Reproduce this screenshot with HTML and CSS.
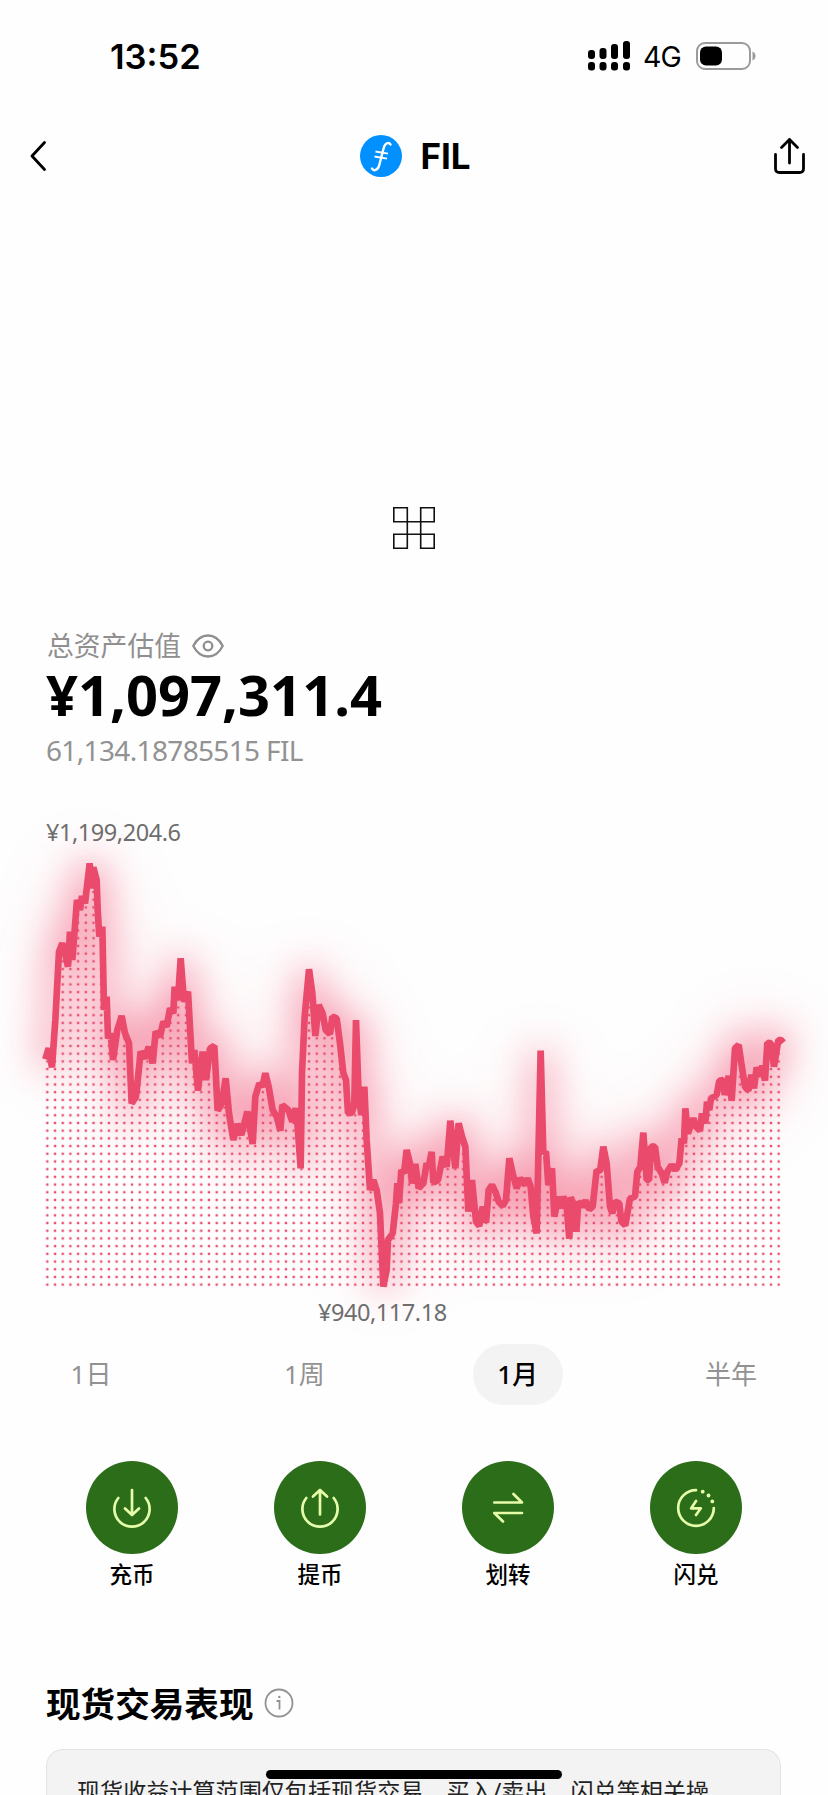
FILE: index.html
```html
<!DOCTYPE html>
<html lang="zh-CN">
<head>
  <meta charset="UTF-8">
  <meta name="viewport" content="width=device-width, initial-scale=1.0">
  <title>FIL</title>
  <link rel="stylesheet" href="styles.css">
</head>
<body>
  <!-- Status Bar -->
  <div class="status-bar">
    <span class="time">13:52</span>
    <div class="status-icons">
      <svg class="signal" width="43" height="30" viewBox="0 0 43 30">
        <rect x="0" y="9" width="7" height="9" rx="3"/>
        <rect x="11.5" y="7" width="7" height="11" rx="3"/>
        <rect x="23" y="3" width="7" height="15" rx="3"/>
        <rect x="35" y="0" width="7" height="18" rx="3"/>
        <rect x="0" y="21" width="7" height="8.5" rx="3"/>
        <rect x="11.5" y="21" width="7" height="8.5" rx="3"/>
        <rect x="23" y="21" width="7" height="8.5" rx="3"/>
        <rect x="35" y="21" width="7" height="8.5" rx="3"/>
      </svg>
      <span class="network">4G</span>
      <svg class="battery" width="60" height="28" viewBox="0 0 60 28">
        <rect x="1" y="1" width="53" height="26" rx="8" fill="none" stroke="#9b9b9b" stroke-width="2"/>
        <rect x="4" y="4.5" width="22" height="19" rx="6"/>
        <path d="M56.5 9.500 C60.500 11 60.500 17 56.500 18.500 Z" fill="#9b9b9b"/>
      </svg>
    </div>
  </div>

  <!-- Header Section -->
  <div class="header">
    <svg class="back" width="20" height="32" viewBox="0 0 20 32">
      <path d="M16.500 2.500 L4 16 L16.500 29.500"/>
    </svg>
    <div class="coin">
      <svg width="42" height="42" viewBox="0 0 42 42">
        <circle cx="21" cy="21" r="21" fill="#0090ff"/>
        <path class="coin-mark" d="M30.500 9.500 C29 6.500 25 8 23.700 13 L19.300 30 C18 35.500 13.500 36.500 12 33.500"/>
        <path class="coin-bar" d="M15.500 16.500 L28 18.700 M14.500 21.500 L27 23.700"/>
      </svg>
      <h1>FIL</h1>
    </div>
    <svg class="share" width="34" height="38" viewBox="0 0 34 38">
      <path d="M2.500 17.500 V31.500 Q2.500 35.500 6.500 35.500 H26.500 Q30.500 35.500 30.500 31.500 V17.500 M16.500 26 V2.500 M8.500 10.500 L16.500 2.500 L24.500 10.500"/>
    </svg>
  </div>

  <!-- Refresh indicator -->
  <div class="loader">
    <svg width="42" height="42" viewBox="0 0 42 42">
      <path d="M.8 .8 H14.300 V41.200 H.8 V27.300 H41.200 V41.200 H27.700 V.8 H41.200 V14.700 H.8 Z"/>
    </svg>
  </div>

  <!-- Balance Section -->
  <div class="balance">
    <div class="balance-label">
      <span>总资产估值</span>
      <svg width="32" height="24" viewBox="0 0 32 24">
        <path d="M1.300 12 C8.500 -2 23.500 -2 30.700 12 C23.500 26 8.500 26 1.300 12 Z"/>
        <circle cx="16" cy="12" r="4.300"/>
      </svg>
    </div>
    <div class="balance-value">¥1,097,311.4</div>
    <div class="balance-coin">61,134.18785515 FIL</div>
  </div>

  <!-- Chart Section -->
  <div class="chart">
    <div class="chart-max">¥1,199,204.6</div>
    <svg class="chart-plot" width="828" height="440" viewBox="-90 90 2484 1320">
      <defs>
        <pattern id="dots" x="40.500" y="1405.500" width="23.095" height="23.095" patternUnits="userSpaceOnUse">
          <rect x="8" y="8" width="7" height="7" fill="#ea4a6c"/>
        </pattern>
        <filter id="glow" filterUnits="userSpaceOnUse" x="-300" y="-300" width="2900" height="2100">
          <feGaussianBlur stdDeviation="54"/>
        </filter>
        <filter id="halo" filterUnits="userSpaceOnUse" x="-400" y="-400" width="3200" height="2300">
          <feGaussianBlur stdDeviation="110"/>
        </filter>
        <polyline id="line" points="46,718 56,685 66,742 76,600 87,395 97,370 105,400 114,440 120,335 127,420 141,240 150,270 156,228 165,250 172,190 179,130 184,205 190,142 200,180 203,270 208,350 217,320 222,570 230,530 234,655 242,640 249,720 262,630 275,588 285,640 297,670 305,850 318,830 332,695 345,715 356,680 368,730 377,635 390,650 400,605 410,620 420,565 430,580 434,500 444,540 452,415 462,545 474,515 486,730 493,690 504,812 518,695 528,780 540,685 553,678 563,872 575,850 587,775 597,880 610,960 622,912 634,945 652,875 668,972 676,830 688,790 697,800 706,760 716,800 728,870 740,890 751,932 757,855 775,870 787,905 797,865
          800,880 812,1045 816,760 824,590 837,448 847,520 856,648 866,555 878,580 887,630 900,642 907,590 920,595 930,670 940,760 948,780 954,880 966,878 973,850 978,600 986,830 994,885 1003,800 1010,960 1020,1110 1030,1080 1040,1110 1050,1180 1060,1400 1070,1350 1074,1260 1088,1240 1098,1150 1102,1090 1107,1150 1114,1050 1122,1060 1130,990 1140,1030 1146,1090 1156,1032 1166,1105 1180,1090 1190,1030 1196,1040 1205,996 1210,1088 1224,1080 1238,1010 1250,1040 1261,902 1276,1045 1286,910 1296,950 1306,980 1315,1175 1326,1080 1338,1205 1348,1218 1358,1160 1368,1208 1376,1110 1386,1095 1396,1115 1406,1145 1418,1158 1428,1140 1438,1015 1448,1060 1460,1105 1470,1075 1485,1095 1493,1075 1502,1100 1510,1190 1520,1240
          1532,692 1540,1000 1548,995 1555,1095 1566,1045 1573,1190 1585,1130 1593,1165 1600,1130 1610,1160 1618,1256 1622,1132 1630,1150 1639,1235 1645,1145 1657,1160 1667,1142 1678,1168 1688,1160 1700,1050 1710,1055 1720,980 1730,1030 1740,1160 1747,1180 1755,1145 1768,1150 1774,1205 1786,1216 1800,1135 1815,1130 1822,1055 1831,1040 1840,938 1850,1080 1857,1080 1863,980 1875,980 1883,1040 1895,1060 1904,1088 1912,1055 1925,1035 1936,1050 1948,1030 1955,955 1962,970 1966,865 1974,940 1990,895 1998,920 2010,932 2016,880 2026,910 2031,845 2038,870 2043,835 2060,825 2068,782 2080,780 2084,825 2096,768 2105,842 2115,685 2126,675 2134,730 2145,800 2155,812 2164,765 2172,805 2180,742 2190,770 2197,737 2205,782 2212,668 2223,670 2232,740 2245,660 2253,660 2260,668"/>
        <!-- everything above the line is painted black so the dots stay below it -->
        <mask id="below" maskUnits="userSpaceOnUse" x="0" y="0" width="2400" height="1500">
          <rect x="42" y="0" width="2210" height="1400" fill="#fff"/>
          <polygon fill="#000" points="40,0 40,718 56,718 66,742 76,600 87,395 97,370 105,400 114,440 127,420 141,240 150,270 165,250 172,190 179,130 184,205 190,142 200,180 208,350 217,320 222,570 234,655 249,720 262,630 275,588 297,670 305,850 318,830 332,695 345,715 368,730 377,635 400,605 420,565 434,500 444,540 452,415 462,545 474,515 486,730 504,812 528,780 553,678 563,872 587,775 597,880 610,960 634,945 652,875 668,972 676,830 706,760 728,870 751,932 787,905 800,880 812,1045 816,760 824,590 837,448 847,520 856,648 866,555 878,580 900,642 907,590 920,595 954,880 973,850 986,830 1003,800 1020,1110 1040,1110 1050,1180 1060,1400 1070,1350 1074,1260 1088,1240 1098,1150 1114,1050 1130,990 1146,1090 1166,1105 1190,1030 1210,1088 1224,1080 1250,1040 1276,1045 1286,910 1306,980 1315,1175 1338,1205 1368,1208 1386,1095 1418,1158 1438,1015 1460,1105 1493,1075 1510,1190 1520,1240 1532,692 1555,1095 1573,1190 1610,1160 1618,1256 1639,1235 1657,1160 1688,1160 1700,1050 1720,980 1740,1160 1768,1150 1774,1205 1786,1216 1800,1135 1815,1130 1831,1040 1850,1080 1863,980 1875,980 1904,1088 1948,1030 1966,940 2010,932 2043,835 2080,780 2105,842 2115,685 2126,675 2155,812 2205,782 2223,670 2232,740 2245,660 2260,668 2260,0"/>
        </mask>
      </defs>
      <use href="#line" class="chart-halo" filter="url(#halo)"/>
      <use href="#line" class="chart-glow" filter="url(#glow)"/>
      <rect x="40" y="90" width="2220" height="1315" fill="url(#dots)" mask="url(#below)"/>
      <use href="#line" class="chart-line"/>
    </svg>
    <div class="chart-min">¥940,117.18</div>
  </div>

  <!-- Range Tabs -->
  <div class="tabs">
    <span class="tab">1日</span>
    <span class="tab">1周</span>
    <span class="tab active">1月</span>
    <span class="tab">半年</span>
  </div>

  <!-- Action Buttons -->
  <div class="actions">
    <div class="action">
      <div class="action-icon">
        <svg width="44" height="44" viewBox="0 0 44 44">
          <path d="M8.300 12 A17.600 17.600 0 1 0 35.700 12 M22 4 V28.500 M15 22.500 L22 29 L29 22.500"/>
        </svg>
      </div>
      <span>充币</span>
    </div>
    <div class="action">
      <div class="action-icon">
        <svg width="44" height="44" viewBox="0 0 44 44">
          <path d="M8.300 12 A17.600 17.600 0 1 0 35.700 12 M22 28.500 V4 M15 10.500 L22 4 L29 10.500"/>
        </svg>
      </div>
      <span>提币</span>
    </div>
    <div class="action">
      <div class="action-icon">
        <svg width="44" height="44" viewBox="0 0 44 44">
          <path d="M8.300 16.500 H36 L27.500 8 M36 27 H8.300 L17 35.500"/>
        </svg>
      </div>
      <span>划转</span>
    </div>
    <div class="action">
      <div class="action-icon">
        <svg width="44" height="44" viewBox="0 0 44 44">
          <path d="M22 4.200 A17.800 17.800 0 1 0 39.800 22 M22 15 L17.200 22.300 H26.800 L22 29"/>
          <circle cx="28.700" cy="5.700" r="1.900"/>
          <circle cx="34.500" cy="9.500" r="1.900"/>
          <circle cx="38.300" cy="15.400" r="1.900"/>
        </svg>
      </div>
      <span>闪兑</span>
    </div>
  </div>

  <!-- Spot Trading Section -->
  <div class="spot">
    <div class="spot-title">
      <h2>现货交易表现</h2>
      <svg width="30" height="30" viewBox="0 0 30 30">
        <circle cx="15" cy="15" r="13.500"/>
        <path d="M12.500 13 H15.500 V21.500"/>
        <circle class="info-dot" cx="15.300" cy="9" r="1.200"/>
      </svg>
    </div>
    <div class="spot-card">现货收益计算范围仅包括现货交易、买入/卖出、闪兑等相关操</div>
  </div>

  <div class="home-indicator"></div>
</body>
</html>
```
FILE: styles.css
```css
* {
  margin: 0;
  padding: 0;
  box-sizing: border-box;
}

body {
  position: relative;
  width: 828px;
  height: 1795px;
  overflow: hidden;
  background-color: #fefefe;
  color: #000;
  font-family: "Noto Sans", "Noto Sans CJK SC", sans-serif;
}

svg {
  display: block;
  flex-shrink: 0;
}

/* Status Bar */
.status-bar {
  height: 112px;
  padding: 0 72px 0 110px;
  display: flex;
  align-items: center;
  justify-content: space-between;
  font-family: Inter, sans-serif;
}

.time {
  font-size: 34.5px;
  font-weight: 600;
}

.status-icons {
  display: flex;
  align-items: center;
}

.network {
  font-size: 28.5px;
  width: 38px;
  margin: 1px 15px 0 12px;
  letter-spacing: -1px;
}

/* Header Section */
.header {
  height: 88px;
  padding: 0 21px 0 28px;
  display: flex;
  align-items: center;
  justify-content: space-between;
}

.back,
.share {
  fill: none;
  stroke: #000;
  stroke-width: 2.8;
  stroke-linecap: round;
  stroke-linejoin: round;
}

.coin {
  display: flex;
  align-items: center;
  gap: 18px;
  padding-left: 10px;
}

.coin h1 {
  font-family: Inter, sans-serif;
  font-size: 35px;
  font-weight: 700;
  line-height: 42px;
}

.coin-mark {
  fill: none;
  stroke: #fff;
  stroke-width: 2.4;
  stroke-linecap: round;
}

.coin-bar {
  stroke: #fff;
  stroke-width: 1.8;
}

/* Refresh indicator */
.loader {
  height: 425px;
  padding-top: 307px;
  display: flex;
  justify-content: center;
}

.loader path {
  fill: none;
  stroke: #111;
  stroke-width: 1.6;
}

/* Balance Section */
.balance {
  padding-left: 46px;
  height: 192px;
}

.balance-label {
  display: flex;
  align-items: center;
  gap: 11px;
  height: 40px;
  padding-left: 1px;
  color: #8f8f8f;
  font-family: "Noto Sans CJK SC", sans-serif;
  font-size: 26.8px;
  line-height: 38px;
}

.balance-label svg {
  margin-top: 2px;
  fill: none;
  stroke: #8f8f8f;
  stroke-width: 2.3;
}

.balance-value {
  font-size: 56px;
  font-weight: 700;
  line-height: 58px;
}

.balance-coin {
  margin-top: 7px;
  color: #929292;
  font-size: 28px;
  letter-spacing: -0.65px;
  line-height: 40px;
}

/* Chart Section */
.chart {
  height: 513px;
}

.chart-max,
.chart-min {
  color: #6e6e6e;
  font-size: 23.5px;
  letter-spacing: -0.45px;
  line-height: 30px;
}

.chart-max {
  height: 33px;
  margin-left: 46px;
}

.chart-min {
  margin-top: 7px;
  margin-left: 318px;
}

.chart-plot {
  overflow: visible;
}

.chart-halo,
.chart-glow {
  fill: none;
  stroke: #f0486d;
}

.chart-halo {
  stroke-width: 80;
  opacity: 0.16;
}

.chart-glow {
  stroke-width: 60;
  opacity: 0.46;
}

.chart-line {
  fill: none;
  stroke: #ea4a6c;
  stroke-width: 20;
  stroke-linejoin: bevel;
}

/* Range Tabs */
.tabs {
  display: flex;
  justify-content: space-between;
  padding: 14px 52px 0 46px;
}

.tab {
  width: 90px;
  height: 61px;
  border-radius: 31px;
  color: #929292;
  font-size: 26px;
  line-height: 60px;
  text-align: center;
}

.tab.active {
  background-color: #f3f3f3;
  color: #000;
  font-weight: 500;
}

/* Action Buttons */
.actions {
  display: grid;
  grid-template-columns: repeat(4, 1fr);
  margin-top: 56px;
  padding: 0 38px;
}

.action {
  display: flex;
  flex-direction: column;
  align-items: center;
  font-size: 22.5px;
  font-weight: 500;
  line-height: 42px;
}

.action-icon {
  width: 92px;
  height: 93px;
  border-radius: 50%;
  background-color: #2b6d18;
  display: flex;
  align-items: center;
  justify-content: center;
}

.action-icon path {
  fill: none;
  stroke: #e6fdaa;
  stroke-width: 2.7;
  stroke-linecap: round;
  stroke-linejoin: round;
}

.action-icon circle {
  fill: #e6fdaa;
}

/* Spot Trading Section */
.spot {
  margin-top: 81px;
  padding: 0 47px 0 46px;
}

.spot-title {
  display: flex;
  align-items: center;
  gap: 11px;
  height: 50px;
}

.spot-title h2 {
  font-size: 34.6px;
  font-weight: 700;
}

.spot-title svg {
  margin-top: 2px;
  fill: none;
  stroke: #929292;
  stroke-width: 1.8;
}

.spot-title .info-dot {
  fill: #929292;
  stroke: none;
}

.spot-card {
  margin-top: 22px;
  height: 46px;
  padding: 24px 30px 0;
  border: 1.5px solid #e4e4e4;
  border-bottom: none;
  border-radius: 17px 17px 0 0;
  background-color: #f3f3f3;
  color: #222;
  font-size: 23.1px;
  line-height: 34px;
  white-space: nowrap;
  overflow: hidden;
}

.home-indicator {
  position: absolute;
  left: 266px;
  bottom: 16px;
  width: 296px;
  height: 9px;
  border-radius: 5px;
  background-color: #000;
}
```
